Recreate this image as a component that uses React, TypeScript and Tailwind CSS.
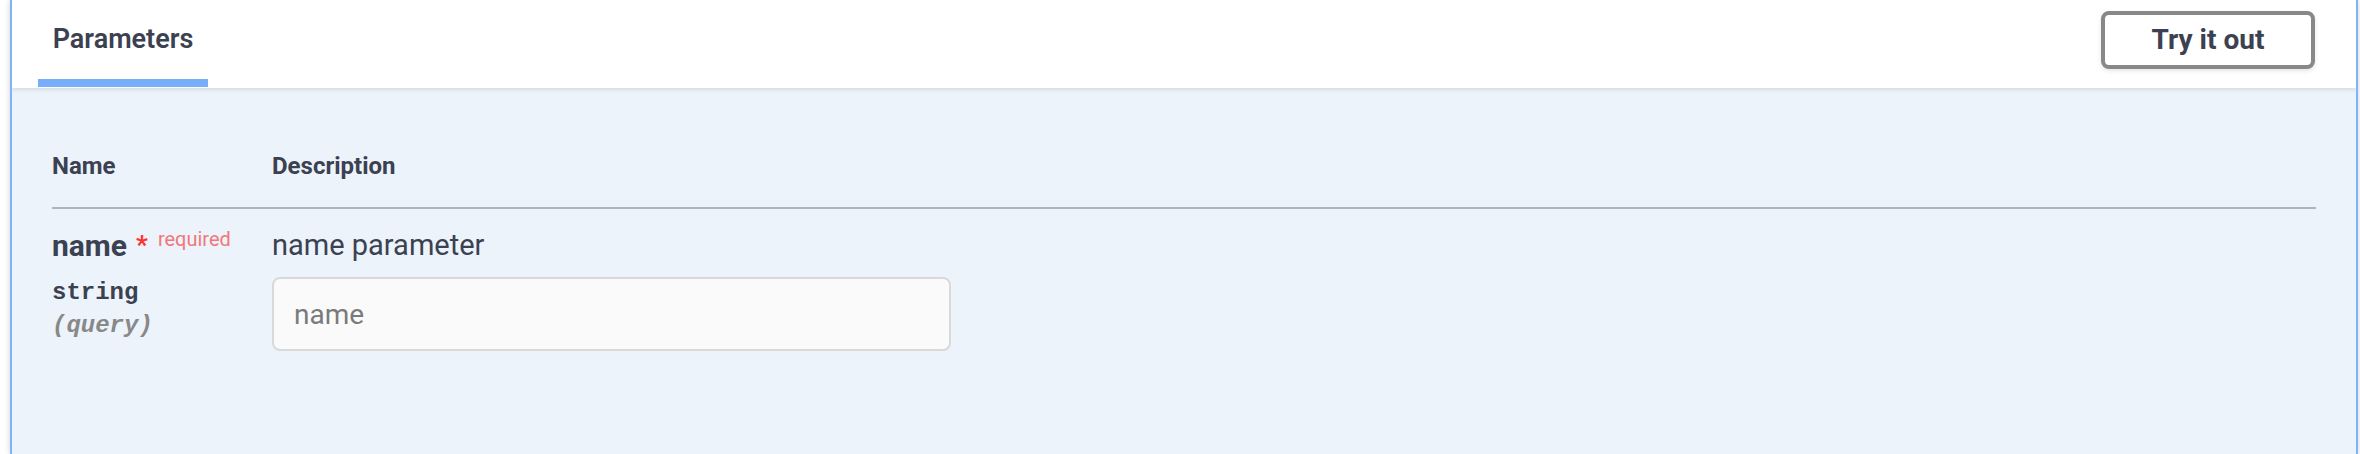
export default function App() {
  return (
    <div className="min-h-screen bg-white pt-0" style={{ fontFamily: 'Roboto, "Noto Sans", sans-serif' }}>
      <div className="ml-[10px] mr-[2px] h-[454px] overflow-hidden border-x-2 border-[#7db3f8] bg-[#ecf3fb] text-[#3b4151] shadow-[0_0_6px_rgba(0,0,0,0.19)]">
        {/* Section header */}
        <div className="relative z-10 flex h-[88px] items-start justify-between bg-white pl-[26px] pr-[41px] shadow-[0_2px_4px_rgba(0,0,0,0.1)]">
          <div className="flex w-[170px] flex-col items-center pt-[23px]">
            <h4 className="text-[27px] font-semibold leading-[33px]">Parameters</h4>
            <div className="mt-[23px] h-[8px] w-full bg-[#78aef9]" />
          </div>
          <button className="mt-[11px] h-[58px] w-[214px] rounded-[8px] border-4 border-[#888888] bg-white text-[28px] font-bold leading-[50px] text-[#3b4151] shadow-[0_2px_4px_rgba(0,0,0,0.1)]">
            Try it out
          </button>
        </div>

        {/* Parameters table */}
        <div className="px-[40px] pt-[40px]">
          <div className="flex border-b-2 border-[#adb3c2] pb-[27px] pt-[24px] text-[24px] font-bold leading-[28px]">
            <div className="w-[220px]">Name</div>
            <div>Description</div>
          </div>

          <div className="flex pt-[19px]">
            <div className="w-[220px]">
              <div className="flex items-start text-[30px] font-bold leading-[35px]">
                <span>name</span>
                <span className="ml-[9px] mt-[3px] text-[26px] leading-[28px] text-[#f33]">*</span>
                <span className="ml-[10px] mt-[-1px] text-[20px] font-normal leading-[24px] text-[#f0787a]">
                  required
                </span>
              </div>
              <div
                className="mt-[16px] text-[24px] font-bold leading-[27px]"
                style={{ fontFamily: '"Liberation Mono", "DejaVu Sans Mono", monospace' }}
              >
                string
              </div>
              <div
                className="mt-[6px] text-[24px] font-bold italic leading-[27px] text-[#888888]"
                style={{ fontFamily: '"Liberation Mono", "DejaVu Sans Mono", monospace' }}
              >
                (query)
              </div>
            </div>

            <div className="flex flex-col">
              <p className="text-[29px] leading-[34px]">name parameter</p>
              <input
                placeholder="name"
                className="mt-[15px] h-[74px] w-[679px] rounded-[8px] border-2 border-[#d9d9d9] bg-[#fafafa] px-[20px] text-[28px] outline-none placeholder:text-[#7a7a7a]"
              />
            </div>
          </div>
        </div>
      </div>
    </div>
  );
}
